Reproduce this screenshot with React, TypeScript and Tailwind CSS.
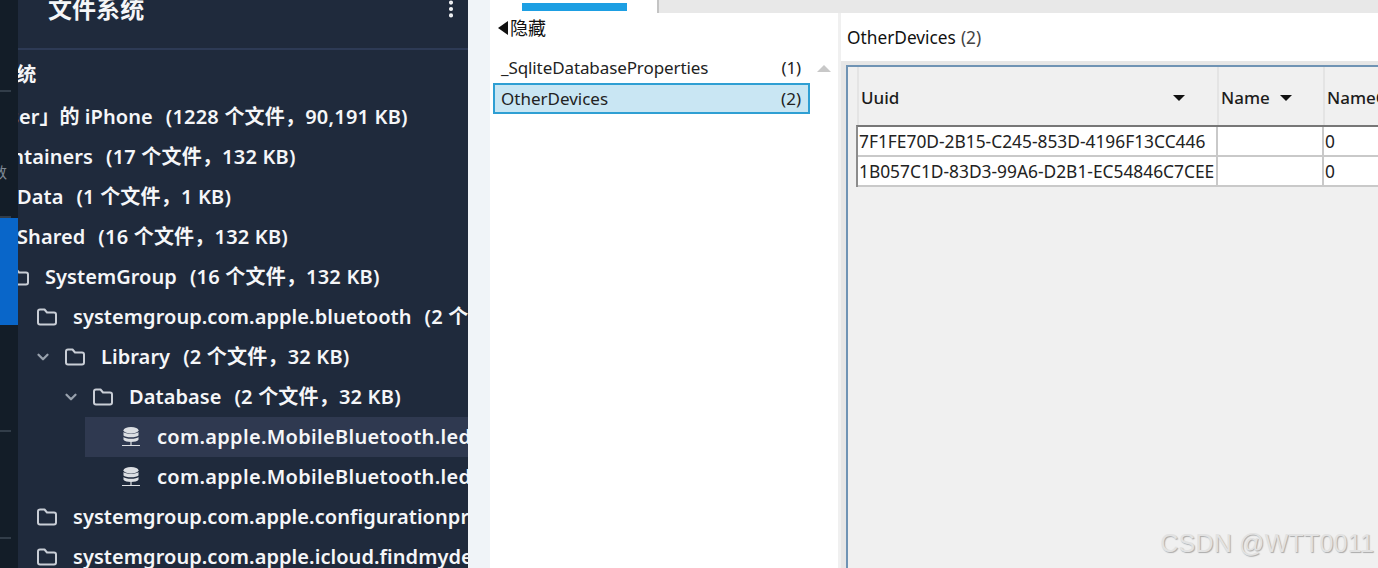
import { ChevronDown, EllipsisVertical } from "lucide-react";

const sans = `font-['Noto_Sans','Noto_Sans_CJK_SC',sans-serif]`;

function FolderIcon() {
  return (
    <svg width="22" height="20" viewBox="0 0 22 20" fill="none" className="shrink-0 text-[#c9ced6]">
      <path
        d="M2 4.5C2 3.4 2.9 2.5 4 2.5h4.5l2.5 3h7c1.1 0 2 .9 2 2v8c0 1.1-.9 2-2 2H4c-1.1 0-2-.9-2-2z"
        stroke="currentColor"
        strokeWidth="2"
        strokeLinejoin="round"
      />
    </svg>
  );
}

function DbIcon() {
  return (
    <svg width="18" height="20" viewBox="0 0 18 20" className="shrink-0 text-[#dcdfe3]">
      <ellipse cx="9" cy="3.2" rx="7.5" ry="3.2" fill="currentColor" />
      <path d="M1.5 5c1.8 2.4 13.2 2.4 15 0v3.4c-1.8 2.4-13.2 2.4-15 0z" fill="currentColor" />
      <path d="M1.5 10c1.8 2.4 13.2 2.4 15 0v2.8c-1.8 3-13.2 3-15 0z" fill="currentColor" />
      <path d="M9 15v3M0 18.5h18" stroke="currentColor" strokeWidth="1.2" />
    </svg>
  );
}

type Row = {
  label: string;
  meta?: string;
  pad: string;
  icon?: "folder" | "db";
  chevron?: boolean;
  active?: boolean;
  height?: string;
};

const rows: Row[] = [
  { label: "文件系统", pad: "ml-[-62px]", height: "h-[45px]" },
  { label: "「User」的 iPhone", meta: "(1228 个文件，90,191 KB)", pad: "ml-[-44px]" },
  { label: "Containers", meta: "(17 个文件，132 KB)", pad: "ml-[-32px]" },
  { label: "Data", meta: "(1 个文件，1 KB)", pad: "ml-[-1px]" },
  { label: "Shared", meta: "(16 个文件，132 KB)", pad: "ml-[-1px]" },
  { label: "SystemGroup", meta: "(16 个文件，132 KB)", pad: "ml-[-10px]", icon: "folder" },
  { label: "systemgroup.com.apple.bluetooth", meta: "(2 个文件，32 KB)", pad: "ml-[18px]", icon: "folder" },
  { label: "Library", meta: "(2 个文件，32 KB)", pad: "ml-[16px]", icon: "folder", chevron: true },
  { label: "Database", meta: "(2 个文件，32 KB)", pad: "ml-[44px]", icon: "folder", chevron: true },
  { label: "com.apple.MobileBluetooth.ledger.db", pad: "ml-[104px] tracking-[0.3px]", icon: "db", active: true },
  { label: "com.apple.MobileBluetooth.ledger.db-wal", pad: "ml-[104px] tracking-[0.3px]", icon: "db" },
  { label: "systemgroup.com.apple.configurationprofiles", pad: "ml-[18px]", icon: "folder" },
  { label: "systemgroup.com.apple.icloud.findmydevice", pad: "ml-[18px]", icon: "folder" },
];

function TreeRow({ row }: { row: Row }) {
  return (
    <div className={`relative flex shrink-0 items-center whitespace-nowrap ${row.height ?? "h-10"}`}>
      {row.active && <div className="absolute inset-y-0 left-[67px] right-0 bg-[#2f3950]" />}
      <div className={`relative flex items-center ${row.pad}`}>
        {row.chevron && <ChevronDown size={18} strokeWidth={3} className="mr-[12px] shrink-0 text-[#98a1ad]" />}
        {row.icon === "folder" && <FolderIcon />}
        {row.icon === "folder" && <span className="w-[15px] shrink-0" />}
        {row.icon === "db" && <DbIcon />}
        {row.icon === "db" && <span className="w-[17px] shrink-0" />}
        <span>{row.label}</span>
        {row.meta && <span className="ml-[13px] tracking-[0.2px]">{row.meta}</span>}
      </div>
    </div>
  );
}

function Rail() {
  return (
    <div className="flex h-full w-[18px] shrink-0 flex-col bg-[#131d28]">
      <div className="h-[90px]" />
      <div className="h-[2px] w-[11px] bg-[#323d49]" />
      <div className={`ml-[-8px] mt-[70px] h-[20px] text-[15px] leading-5 text-[#7f8a96] ${sans}`}>数</div>
      <div className="h-[34px]" />
      <div className="h-[2px] w-[11px] bg-[#323d49]" />
      <div className="h-[107px] bg-[#0966c9]" />
      <div className="h-[105px]" />
      <div className="h-[2px] w-[11px] bg-[#323d49]" />
      <div className="h-[105px]" />
      <div className="h-[2px] w-[11px] bg-[#323d49]" />
    </div>
  );
}

function Sidebar() {
  return (
    <div className={`flex h-full w-[450px] shrink-0 flex-col overflow-hidden bg-[#1f2a3c] font-semibold tracking-[0.06px] text-[#f5f6f8] ${sans}`}>
      <div className="flex h-[50px] shrink-0 items-start justify-between border-b-2 border-[#2d3a55] pl-[30px] pr-[6px]">
        <span className="mt-[-9px] text-2xl leading-9">文件系统</span>
        <EllipsisVertical size={22} strokeWidth={2.5} className="mt-[-2px]" />
      </div>
      <div className="flex flex-col pt-[2px] text-xl">
        {rows.map((row) => (
          <TreeRow key={row.label} row={row} />
        ))}
      </div>
    </div>
  );
}

function ObjectList() {
  return (
    <div className="flex h-full w-[348px] shrink-0 flex-col bg-white pt-[3px] text-[17px] text-[#222]">
      <div className="flex h-6 items-center pl-[8px] text-lg leading-6 text-[#111]">
        <span className="mr-[2px] h-0 w-0 border-y-[7px] border-r-[10px] border-y-transparent border-r-[#111]" />
        隐藏
      </div>
      <div className="mt-[13px] flex h-[30px] items-center">
        <div className="flex w-[320px] items-center justify-between pl-[11px] pr-[9px] tracking-[-0.1px]">
          <span>_SqliteDatabaseProperties</span>
          <span>(1)</span>
        </div>
        <span className="ml-[7px] h-0 w-0 border-x-[7px] border-b-[7px] border-x-transparent border-b-[#c8c8c8]" />
      </div>
      <div className="ml-[3px] flex h-[31px] w-[317px] items-center justify-between border-2 border-[#2f9fd3] bg-[#c9e6f3] pl-[6px] pr-[7px]">
        <span>OtherDevices</span>
        <span>(2)</span>
      </div>
    </div>
  );
}

function HeaderCell({ label, width, arrowGap }: { label: string; width: string; arrowGap?: string }) {
  return (
    <div className={`flex h-full shrink-0 items-center border-r-2 border-[#e4e4e4] pl-[2px] pt-[3px] font-medium text-[#1c1c1c] ${width}`}>
      <span>{label}</span>
      {arrowGap && <span className={`h-0 w-0 border-x-[6px] border-t-[6px] border-x-transparent border-t-[#111] ${arrowGap}`} />}
    </div>
  );
}

function DataRow({ uuid }: { uuid: string }) {
  return (
    <div className="flex h-[30px] items-center border-b-2 border-[#c9c9c9] bg-white text-[17.35px]">
      <div className="flex h-full w-[360px] shrink-0 items-center border-r-2 border-[#c9c9c9] pl-[1px]">{uuid}</div>
      <div className="h-full w-[106px] shrink-0 border-r-2 border-[#c9c9c9]" />
      <div className="flex h-full flex-1 items-center pl-[1px]">0</div>
    </div>
  );
}

function TablePane() {
  return (
    <div className="flex h-full min-w-0 flex-1 flex-col bg-[#e6e6e6] text-[17px] text-[#222]">
      <div className="flex h-[48px] shrink-0 items-center bg-white pl-[6px] pt-[1px] text-[17.3px]">
        <span className="text-[#111]">OtherDevices</span>
        <span className="ml-[5px] text-[#444]">(2)</span>
      </div>
      <div className="ml-[5px] mt-[4px] flex-1 border-l-2 border-t-2 border-[#6f93b4] bg-[#f0f0f0] pl-[8px]">
        <div className="ml-px flex h-[58px] border-l-2 border-[#e4e4e4]">
          <HeaderCell label="Uuid" width="w-[360px]" arrowGap="ml-[274px]" />
          <HeaderCell label="Name" width="w-[106px]" arrowGap="ml-[10px]" />
          <HeaderCell label="NameOrigin" width="w-[100px]" />
        </div>
        <div className="border-l-2 border-t-2 border-l-[#8c8c8c] border-t-[#777]">
          <DataRow uuid="7F1FE70D-2B15-C245-853D-4196F13CC446" />
          <DataRow uuid="1B057C1D-83D3-99A6-D2B1-EC54846C7CEE" />
        </div>
      </div>
    </div>
  );
}

export default function App() {
  return (
    <div className={`relative flex h-[568px] w-[1378px] overflow-hidden bg-[#f0f4f8] ${sans}`}>
      <Rail />
      <Sidebar />
      <div className="ml-[22px] flex h-full min-w-0 flex-1 flex-col">
        <div className="flex h-[13px] shrink-0 bg-[#e8e8e8]">
          <div className="h-full w-[169px] border-r-2 border-[#c4c4c4] bg-white pl-[32px] pt-[3px]">
            <div className="h-[8px] w-[105px] bg-[#1d9fe3]" />
          </div>
        </div>
        <div className="flex min-h-0 flex-1">
          <ObjectList />
          <div className="w-[3px] shrink-0 bg-[#f0f0f0]" />
          <TablePane />
        </div>
      </div>
      <span className="absolute bottom-[9px] right-[4px] font-['Liberation_Sans',sans-serif] text-[25px] leading-8 tracking-[0.2px] text-[#e2e2e2] [text-shadow:1px_1px_1px_#aaa]">
        CSDN @WTT0011
      </span>
    </div>
  );
}
